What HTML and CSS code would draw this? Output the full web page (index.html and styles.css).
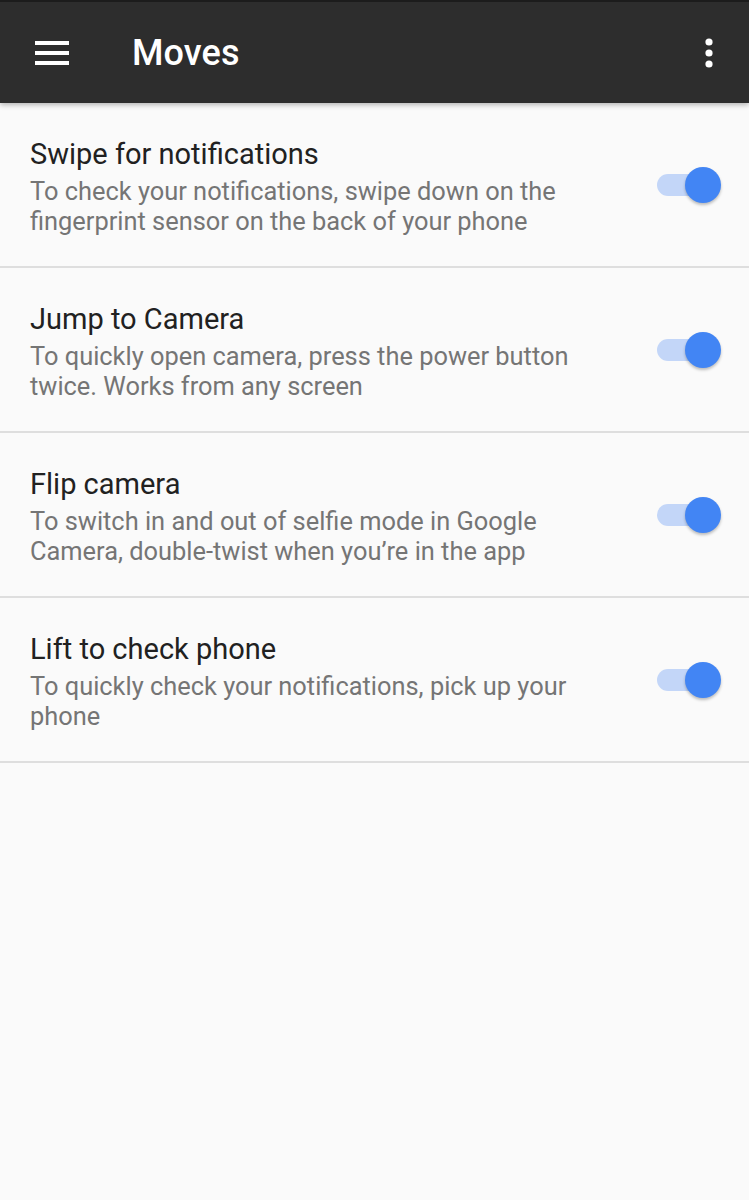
FILE: index.html
```html
<html lang="en">
<head>
    <meta charset="UTF-8">
    <meta name="viewport" content="width=device-width, initial-scale=1.0">
    <title>Moves</title>
    <link rel="stylesheet" href="styles.css">
</head>
<body>
    <div class="toolbar">
        <svg class="menu-icon" width="34" height="24" viewBox="0 0 34 24">
            <rect x="0" y="0" width="34" height="4" fill="#fff"/>
            <rect x="0" y="10" width="34" height="4" fill="#fff"/>
            <rect x="0" y="20" width="34" height="4" fill="#fff"/>
        </svg>
        <h1>Moves</h1>
        <svg class="more-icon" width="8" height="30" viewBox="0 0 8 30">
            <circle cx="4" cy="4" r="3.6" fill="#fff"/>
            <circle cx="4" cy="15" r="3.6" fill="#fff"/>
            <circle cx="4" cy="26" r="3.6" fill="#fff"/>
        </svg>
    </div>

    <div class="list">
        <div class="setting">
            <div class="text">
                <div class="title">Swipe for notifications</div>
                <div class="summary">To check your notifications, swipe down on the fingerprint sensor on the back of your phone</div>
            </div>
            <div class="switch"><span class="track"></span><span class="thumb"></span></div>
        </div>
        <div class="setting">
            <div class="text">
                <div class="title">Jump to Camera</div>
                <div class="summary">To quickly open camera, press the power button twice. Works from any screen</div>
            </div>
            <div class="switch"><span class="track"></span><span class="thumb"></span></div>
        </div>
        <div class="setting">
            <div class="text">
                <div class="title">Flip camera</div>
                <div class="summary">To switch in and out of selfie mode in Google Camera, double-twist when you’re in the app</div>
            </div>
            <div class="switch"><span class="track"></span><span class="thumb"></span></div>
        </div>
        <div class="setting">
            <div class="text">
                <div class="title">Lift to check phone</div>
                <div class="summary">To quickly check your notifications, pick up your phone</div>
            </div>
            <div class="switch"><span class="track"></span><span class="thumb"></span></div>
        </div>
    </div>
</body>
</html>
```

FILE: styles.css
```css
body {
    margin: 0;
    background-color: #fafafa;
    font-family: Roboto, "Noto Sans", sans-serif;
    height: 1200px;
    overflow: hidden;
}
.toolbar {
    position: relative;
    z-index: 2;
    height: 101px;
    background-color: #2d2d2d;
    border-top: 2px solid #1c1c1c;
    display: flex;
    align-items: center;
    padding: 0 36px 0 35px;
    box-shadow: 0 2px 5px rgba(0,0,0,0.28);
}
.toolbar h1 {
    margin: 0 0 0 63px;
    flex: 1;
    color: #fff;
    font-size: 36px;
    font-weight: 500;
    letter-spacing: 0.1px;
}
.menu-icon, .more-icon {
    display: block;
}
.setting {
    box-sizing: border-box;
    height: 165px;
    display: flex;
    align-items: center;
    padding: 0 28px 0 30px;
    border-bottom: 2px solid #dedede;
}
.text {
    flex: 1;
    padding-top: 4px;
    padding-right: 30px;
}
.title {
    color: #212121;
    font-size: 29px;
    line-height: 34px;
    margin-bottom: 5px;
}
.summary {
    color: #757575;
    font-size: 25.4px;
    line-height: 30px;
}
.switch {
    position: relative;
    width: 64px;
    height: 36px;
    flex-shrink: 0;
}
.track {
    position: absolute;
    left: 0;
    top: 7px;
    width: 56px;
    height: 22px;
    border-radius: 11px;
    background-color: #c3d6f8;
}
.thumb {
    position: absolute;
    right: 0;
    top: 0;
    width: 36px;
    height: 36px;
    border-radius: 50%;
    background-color: #4285f4;
    box-shadow: 0 2px 3px rgba(0,0,0,0.25);
}
```
